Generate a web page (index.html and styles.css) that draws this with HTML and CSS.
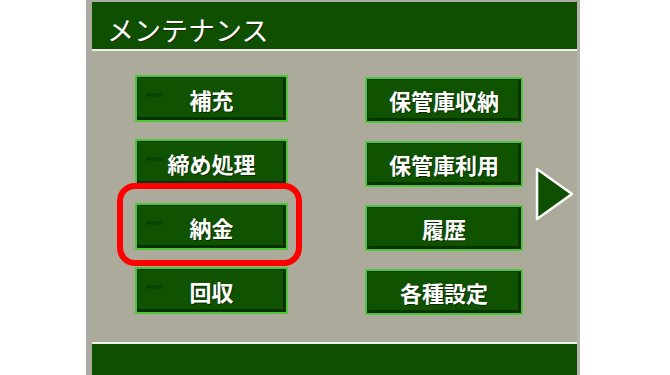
FILE: index.html
```html
<!DOCTYPE html>
<html lang="ja">
<head>
<meta charset="utf-8">
<title>メンテナンス</title>
<link rel="stylesheet" href="styles.css">
</head>
<body>
<div class="screen">
  <div class="header">メンテナンス</div>
  <div class="content">
    <div class="col col-left">
      <div class="btn">補充</div>
      <div class="btn">締め処理</div>
      <div class="btn highlight">納金</div>
      <div class="btn">回収</div>
    </div>
    <div class="col col-right">
      <div class="btn">保管庫収納</div>
      <div class="btn">保管庫利用</div>
      <div class="btn">履歴</div>
      <div class="btn">各種設定</div>
    </div>
    <div class="next">
      <svg width="40" height="56" viewBox="0 0 40 56">
        <polygon points="2,2 37,27 2,52" fill="#0f5000" stroke="#ffffff" stroke-width="2.5" stroke-linejoin="round"/>
      </svg>
    </div>
  </div>
  <div class="footer"></div>
</div>
</body>
</html>
```
FILE: styles.css
```css
html, body {
  margin: 0;
  padding: 0;
  background: #ffffff;
}

body {
  font-family: "Noto Sans CJK JP", "Noto Sans", sans-serif;
  width: 670px;
  height: 375px;
  overflow: hidden;
}

.screen {
  margin-left: 86px;
  width: 485px;
  height: 373px;
  border-left: 6px solid #aaa9a2;
  border-right: 3px solid #b4b3ad;
  border-top: 2px solid #aaa9a2;
  background: #abaa9b;
  display: flex;
  flex-direction: column;
}

.header {
  height: 49px;
  box-sizing: border-box;
  background: #0f5000;
  border-bottom: 2px solid #eeeee6;
  color: #ffffff;
  font-size: 27px;
  line-height: 27px;
  padding: 14px 0 0 15px;
  text-shadow: 1px 1px 0 #1a2a05;
}

.content {
  height: 291px;
  display: flex;
  flex-direction: row;
  padding-left: 43px;
}

.col {
  display: flex;
  flex-direction: column;
}

.col-left {
  width: 153px;
  padding-top: 24px;
  gap: 17px;
}

.col-right {
  width: 158px;
  margin-left: 77px;
  padding-top: 26px;
  gap: 18px;
}

.btn {
  position: relative;
  box-sizing: border-box;
  height: 47px;
  background: #0f5200;
  border: 2px solid #4fc63a;
  box-shadow: inset -3px -3px 0 #0a3004, inset 1px 1px 0 #0a3a04;
  color: #ffffff;
  font-size: 22px;
  font-weight: 700;
  display: flex;
  align-items: center;
  justify-content: center;
  text-shadow: 1px 1px 0 #0a2a00;
}

.col-right .btn {
  height: 46px;
}

.col-left .btn::before {
  content: "";
  position: absolute;
  left: 9px;
  top: 16px;
  width: 17px;
  height: 4px;
  background: #0b4300;
  border-radius: 2px;
}

.highlight::after {
  content: "";
  position: absolute;
  left: -20px;
  top: -22px;
  right: -16px;
  bottom: -18px;
  border: 6px solid #ff0000;
  border-radius: 18px;
}

.next {
  margin-left: 12px;
  margin-top: 116px;
  width: 40px;
  height: 56px;
}

.next svg {
  display: block;
}

.footer {
  flex: 1;
  background: #0f5000;
  border-top: 2px solid #eeeee6;
}
```
